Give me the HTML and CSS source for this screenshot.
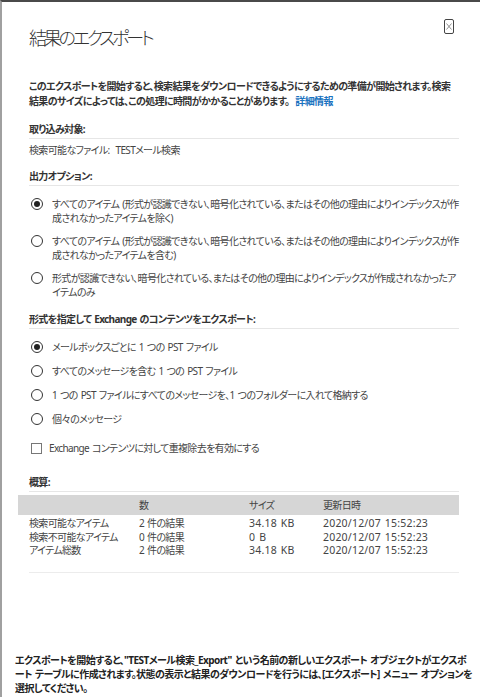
FILE: index.html
```html
<!DOCTYPE html>
<html lang="ja">
<head>
    <meta charset="UTF-8">
    <meta name="viewport" content="width=device-width, initial-scale=1.0">
    <title>結果のエクスポート</title>
    <link rel="stylesheet" href="styles.css">
</head>
<body>
    <div class="dialog">
        <button class="close" aria-label="閉じる">
            <svg width="10" height="15" viewBox="0 0 10 15">
                <rect x="0.5" y="0.5" width="9" height="14" rx="1.5" fill="none" stroke="#444" stroke-width="1"/>
                <path d="M2.5 4.5 L7.5 10.5 M7.5 4.5 L2.5 10.5" stroke="#777" stroke-width="0.8"/>
            </svg>
        </button>

        <h1 class="title">結果のエクスポート</h1>

        <div class="content">
            <p class="intro">このエクスポートを開始すると、検索結果をダウンロードできるようにするための準備が開始されます。検索結果のサイズによっては、この処理に時間がかかることがあります。<a href="#">詳細情報</a></p>

            <section class="group">
                <h2 class="group-head">取り込み対象:</h2>
                <p class="source">検索可能なファイル:&nbsp; TESTメール検索</p>
            </section>

            <section class="group tight">
                <h2 class="group-head">出力オプション:</h2>
                <div class="options wide">
                    <label class="option"><span class="radio checked"></span><span>すべてのアイテム (形式が認識できない、暗号化されている、またはその他の理由によりインデックスが作成されなかったアイテムを除く)</span></label>
                    <label class="option"><span class="radio"></span><span>すべてのアイテム (形式が認識できない、暗号化されている、またはその他の理由によりインデックスが作成されなかったアイテムを含む)</span></label>
                    <label class="option"><span class="radio"></span><span>形式が認識できない、暗号化されている、またはその他の理由によりインデックスが作成されなかったアイテムのみ</span></label>
                </div>
            </section>

            <section class="group">
                <h2 class="group-head">形式を指定して Exchange のコンテンツをエクスポート:</h2>
                <div class="options">
                    <label class="option"><span class="radio checked"></span><span>メールボックスごとに 1 つの PST ファイル</span></label>
                    <label class="option"><span class="radio"></span><span>すべてのメッセージを含む 1 つの PST ファイル</span></label>
                    <label class="option"><span class="radio"></span><span>1 つの PST ファイルにすべてのメッセージを、1 つのフォルダーに入れて格納する</span></label>
                    <label class="option"><span class="radio"></span><span>個々のメッセージ</span></label>
                </div>
                <label class="check"><span class="box"></span><span>Exchange コンテンツに対して重複除去を有効にする</span></label>
            </section>

            <section class="group summary-group">
                <h2 class="group-head">概算:</h2>
                <table class="summary">
                    <thead>
                        <tr><th></th><th>数</th><th>サイズ</th><th>更新日時</th></tr>
                    </thead>
                    <tbody>
                        <tr><td>検索可能なアイテム</td><td>2 件の結果</td><td class="num">34.18 KB</td><td class="num">2020/12/07 15:52:23</td></tr>
                        <tr><td>検索不可能なアイテム</td><td>0 件の結果</td><td class="num">0 B</td><td class="num">2020/12/07 15:52:23</td></tr>
                        <tr><td>アイテム総数</td><td>2 件の結果</td><td class="num">34.18 KB</td><td class="num">2020/12/07 15:52:23</td></tr>
                    </tbody>
                </table>
                <div class="rule"></div>
            </section>
        </div>

        <p class="note">エクスポートを開始すると、"TESTメール検索_Export" という名前の新しいエクスポート オブジェクトがエクスポート テーブルに作成されます。状態の表示と結果のダウンロードを行うには、[エクスポート] メニュー オプションを選択してください。</p>
    </div>
    <div class="scrollbar"><div class="thumb"></div></div>
</body>
</html>
```

FILE: styles.css
```css
html, body {
    margin: 0;
    height: 100%;
}
body {
    display: flex;
    font-family: "Noto Sans", "Noto Sans CJK JP", sans-serif;
    font-feature-settings: "palt";
    font-size: 10px;
    line-height: 15px;
    letter-spacing: -0.65px;
    word-spacing: 1px;
    color: #333;
    background: #fff;
    overflow: hidden;
}
.dialog {
    position: relative;
    flex: 1;
    height: 697px;
    box-sizing: border-box;
    border-top: 2px solid #4a4a4a;
    border-left: 2px solid #a0a0a0;
    display: flex;
    flex-direction: column;
}
.close {
    position: absolute;
    top: 17px;
    left: 442px;
    padding: 0;
    border: none;
    background: none;
    line-height: 0;
    cursor: pointer;
}
.title {
    margin: 22px 0 0 27px;
    font-size: 18px;
    font-weight: 300;
    line-height: 28px;
    letter-spacing: -3.2px;
    color: #333;
}
.content {
    padding: 0 26px 0 27px;
}
.intro {
    margin: 27px 0 0;
    font-weight: bold;
    color: #333;
}
.intro a {
    margin-left: 6px;
    color: #1a73c0;
    text-decoration: none;
}
.group {
    margin-top: 13px;
}
.group.tight {
    margin-top: 11px;
}
.group.summary-group {
    margin-top: 19px;
}
.group-head {
    margin: 0;
    font-size: 10px;
    line-height: 15px;
    font-weight: bold;
    border-bottom: 1px solid #e6e6e6;
    padding-bottom: 1px;
}
.source {
    margin: 4px 0 0;
    color: #444;
}
.options {
    display: flex;
    flex-direction: column;
    gap: 9px;
    margin-top: 11px;
}
.options.wide {
    gap: 9px;
    margin-top: 11px;
    line-height: 14px;
}
.option {
    display: flex;
    align-items: flex-start;
    gap: 9px;
    color: #444;
}
.radio {
    flex: none;
    width: 12px;
    height: 12px;
    margin: 1px 0 0 2px;
    box-sizing: border-box;
    border: 1.5px solid #333;
    border-radius: 50%;
    display: flex;
    align-items: center;
    justify-content: center;
}
.radio.checked::after {
    content: "";
    width: 6px;
    height: 6px;
    border-radius: 50%;
    background: #222;
}
.check {
    display: flex;
    align-items: center;
    gap: 7px;
    margin-top: 14px;
    color: #444;
}
.box {
    width: 9px;
    height: 9px;
    border: 1px solid #777;
    margin-left: 2px;
}
.summary {
    width: 441px;
    table-layout: fixed;
    margin: 3px 0 0 -11px;
    border-collapse: collapse;
    color: #444;
}
.summary th {
    background: #d6d6d6;
    font-weight: normal;
    text-align: left;
    height: 20px;
    padding: 0;
}
.summary td {
    padding: 0;
    line-height: 13.5px;
    white-space: nowrap;
}
.summary th:first-child, .summary td:first-child {
    padding-left: 11px;
    width: 110px;
}
.summary th:nth-child(2) {
    width: 110px;
}
.summary th:nth-child(3) {
    width: 74px;
}
.summary td.num {
    font-size: 10.5px;
    letter-spacing: 0.2px;
}
.summary tbody tr:first-child td {
    padding-top: 2px;
}
.rule {
    margin-top: 14px;
    border-top: 1px solid #ececec;
}
.note {
    margin: auto 0 0;
    padding: 0 10px 2px 13px;
    font-weight: bold;
    line-height: 14px;
    letter-spacing: -0.55px;
    line-break: loose;
    color: #222;
}
.scrollbar {
    width: 5px;
    height: 697px;
    border-left: 1px solid #dcdcdc;
    border-top: 2px solid #4a4a4a;
    box-sizing: border-box;
    background: #f2f2f2;
    padding-top: 10px;
}
.thumb {
    margin-left: 1px;
    height: 670px;
    background: #d4d4d4;
}
```
